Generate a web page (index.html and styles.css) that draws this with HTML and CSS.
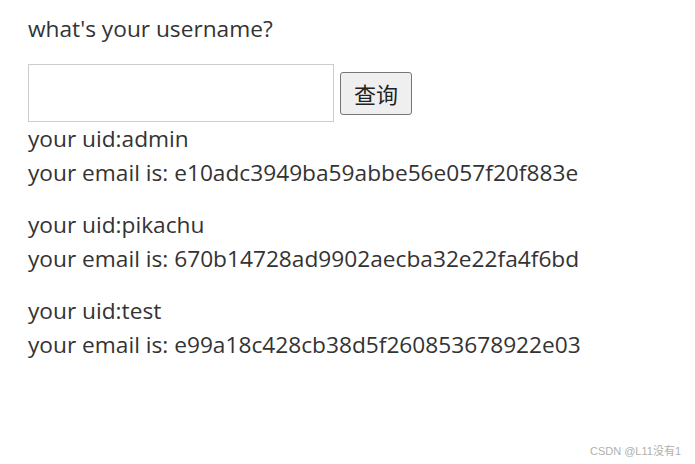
FILE: index.html
```html
<!DOCTYPE html>
<html>
<head>
<meta charset="utf-8">
<link rel="stylesheet" href="styles.css">
</head>
<body>
<div class="page">
  <p class="title">what's your username?</p>
  <form class="search">
    <input class="field" type="text">
    <button class="btn" type="button">查询</button>
  </form>
  <div class="results">
    <p class="row">your uid:admin<br>your email is: e10adc3949ba59abbe56e057f20f883e</p>
    <p class="row">your uid:pikachu<br>your email is: 670b14728ad9902aecba32e22fa4f6bd</p>
    <p class="row">your uid:test<br>your email is: e99a18c428cb38d5f260853678922e03</p>
  </div>
</div>
<div class="mark">CSDN @L11没有1</div>
</body>
</html>
```
FILE: styles.css
```css
html, body {
  margin: 0;
  padding: 0;
  background: #fff;
}
body {
  font-family: "Open Sans", "Noto Sans CJK SC", sans-serif;
  color: #333;
  font-size: 22.7px;
  line-height: 34px;
  width: 695px;
  height: 464px;
  position: relative;
  overflow: hidden;
}
.page {
  padding: 12px 0 0 28px;
}
.title {
  margin: 0;
}
.search {
  margin: 18px 0 0 0;
  display: flex;
  align-items: center;
  gap: 6px;
}
.field {
  width: 306px;
  height: 58px;
  box-sizing: border-box;
  border: 1px solid #ccc;
  margin: 0;
  padding: 0;
}
.btn {
  font-family: "Noto Sans CJK SC", sans-serif;
  font-size: 22px;
  height: 43px;
  width: 72px;
  box-sizing: border-box;
  border: 1px solid #767676;
  border-radius: 3px;
  background: #efefef;
  color: #222;
  padding: 0;
  margin: 0;
}
.results {
  margin-top: 0;
}
.row {
  margin: 0 0 18px 0;
}
.mark {
  position: absolute;
  right: 14px;
  bottom: 6px;
  font-family: "Liberation Sans", "Noto Sans CJK SC", sans-serif;
  font-size: 11px;
  line-height: 14px;
  color: #b0b0b0;
}
```
